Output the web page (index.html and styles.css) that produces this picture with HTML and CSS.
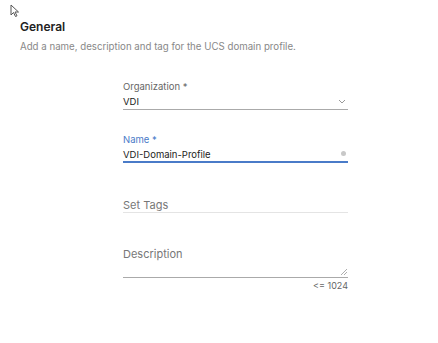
FILE: index.html
```html
<!DOCTYPE html>
<html lang="en">
<head>
    <meta charset="UTF-8">
    <title>General</title>
    <link rel="stylesheet" href="styles.css">
</head>
<body>
    <svg class="cursor" width="10" height="14" viewBox="0 0 10 14">
        <path d="M1 1 L1 11 L3.5 8.5 L5.5 12.5 L7 11.8 L5 8 L8.5 8 Z" fill="#fff" stroke="#555" stroke-width="1"/>
    </svg>

    <div class="header">
        <h2>General</h2>
        <p class="subtitle">Add a name, description and tag for the UCS domain profile.</p>
    </div>

    <div class="form">
        <div class="field field-select">
            <label>Organization *</label>
            <div class="input-row">
                <span class="value">VDI</span>
                <svg class="chevron" width="8" height="5" viewBox="0 0 8 5">
                    <path d="M1 1 L4 4 L7 1" fill="none" stroke="#999" stroke-width="1"/>
                </svg>
            </div>
        </div>

        <div class="field field-active">
            <label>Name *</label>
            <div class="input-row">
                <span class="value">VDI-Domain-Profile</span>
                <span class="clear-dot"></span>
            </div>
        </div>

        <div class="field field-tags">
            <div class="input-row">
                <span class="placeholder">Set Tags</span>
            </div>
        </div>

        <div class="field field-desc">
            <div class="input-row textarea">
                <span class="placeholder">Description</span>
                <svg class="resize" width="6" height="6" viewBox="0 0 6 6">
                    <path d="M0 6 L6 0 M3 6 L6 3" stroke="#999" stroke-width="0.8"/>
                </svg>
            </div>
            <div class="counter">&lt;= 1024</div>
        </div>
    </div>
</body>
</html>
```

FILE: styles.css
```css
body {
    margin: 0;
    width: 438px;
    height: 343px;
    background-color: #fff;
    font-family: Inter, "Noto Sans", sans-serif;
    color: #333;
    position: relative;
}
.cursor {
    position: absolute;
    left: 10px;
    top: 4px;
}
.header {
    padding: 19px 0 0 20px;
}
.header h2 {
    margin: 0;
    font-size: 12px;
    font-weight: 600;
    color: #222;
    line-height: 16px;
}
.subtitle {
    margin: 5px 0 0;
    font-size: 9.7px;
    color: #888;
    line-height: 14px;
}
.form {
    margin: 26px 0 0 123px;
    width: 225px;
}
.field {
    position: relative;
}
.field label {
    display: block;
    font-size: 9.5px;
    color: #666;
    line-height: 13px;
}
.input-row {
    display: flex;
    align-items: center;
    justify-content: space-between;
    border-bottom: 1px solid #aaa;
    padding: 2px 0 1px;
    height: 13px;
}
.value {
    font-size: 9.5px;
    color: #222;
}
.field-select .chevron {
    margin-right: 2px;
}
.field-active {
    margin-top: 23px;
}
.field-active label {
    color: #4a7bc8;
}
.field-active .input-row {
    border-bottom: 2px solid #4a7bc8;
    padding-bottom: 0;
}
.clear-dot {
    width: 5px;
    height: 5px;
    border-radius: 50%;
    background-color: #c8c8c8;
    margin-right: 2px;
    margin-bottom: 3px;
}
.placeholder {
    font-size: 11px;
    color: #777;
}
.field-tags {
    margin-top: 33px;
}
.field-tags .input-row {
    border-bottom-color: #e4e4e4;
    height: 14px;
    padding-bottom: 0;
}
.field-desc {
    margin-top: 34px;
}
.textarea {
    align-items: flex-start;
    height: 30px;
    padding: 0;
    position: relative;
}
.resize {
    position: absolute;
    right: 1px;
    bottom: 2px;
}
.counter {
    text-align: right;
    font-size: 9px;
    color: #666;
    margin-top: 2px;
}
```
